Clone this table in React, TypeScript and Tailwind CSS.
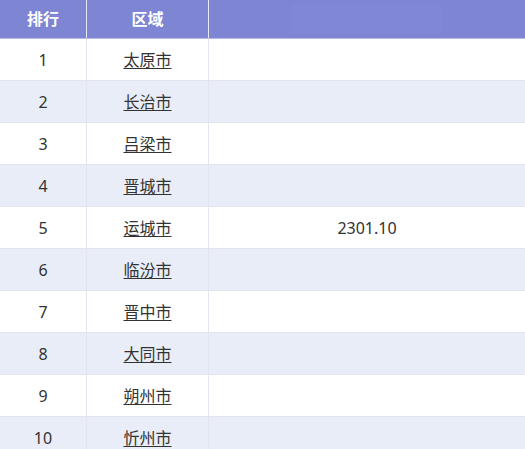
import React from 'react';

const rows = [
  { rank: 1, name: '太原市', value: '' },
  { rank: 2, name: '长治市', value: '' },
  { rank: 3, name: '吕梁市', value: '' },
  { rank: 4, name: '晋城市', value: '' },
  { rank: 5, name: '运城市', value: '2301.10' },
  { rank: 6, name: '临汾市', value: '' },
  { rank: 7, name: '晋中市', value: '' },
  { rank: 8, name: '大同市', value: '' },
  { rank: 9, name: '朔州市', value: '' },
  { rank: 10, name: '忻州市', value: '' },
];

const App: React.FC = () => {
  return (
    <div
      className="w-[525px] h-[449px] overflow-hidden bg-white text-[16px] text-[#333]"
      style={{ fontFamily: '"Noto Sans", "Noto Sans CJK SC", sans-serif' }}
    >
      <div className="grid grid-cols-[87px_122px_1fr] h-[39px] bg-[#7e85d3] text-white font-bold border-b border-[#b7bbe6]">
        <div className="flex items-center justify-center border-r border-[#e6e8f7]">排行</div>
        <div className="flex items-center justify-center border-r border-[#e6e8f7]">区域</div>
        <div className="flex items-center justify-center">
          <div className="w-[150px] h-[30px] rounded-sm bg-[#8088d6]" />
        </div>
      </div>
      {rows.map((r, i) => (
        <div
          key={r.rank}
          className={`grid grid-cols-[87px_122px_1fr] h-[42px] border-b border-[#e2e4f0] ${
            i % 2 === 1 ? 'bg-[#e9edf7]' : 'bg-white'
          }`}
        >
          <div className="flex items-center justify-center border-r border-[#e2e4f0]">{r.rank}</div>
          <div className="flex items-center justify-center border-r border-[#e2e4f0]">
            <a href="#" className="underline underline-offset-2 text-[#333]">
              {r.name}
            </a>
          </div>
          <div className="flex items-center justify-center">{r.value}</div>
        </div>
      ))}
    </div>
  );
};

export default App;
